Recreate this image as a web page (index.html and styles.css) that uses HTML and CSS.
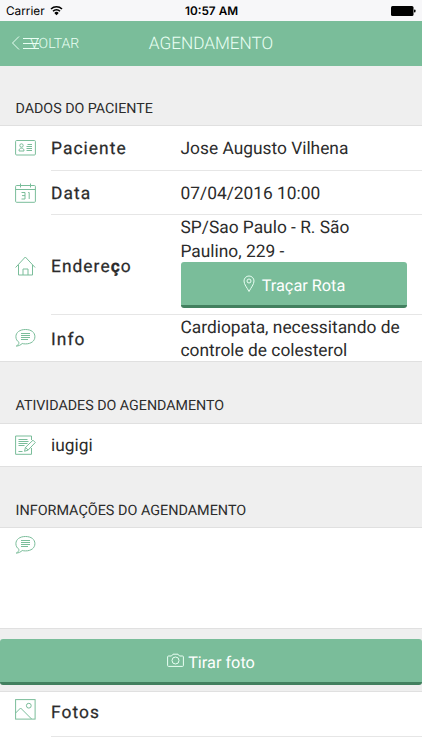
FILE: index.html
```html
<!DOCTYPE html>
<html lang="pt-BR">
<head>
<meta charset="utf-8">
<title>Agendamento</title>
<link rel="stylesheet" href="styles.css">
</head>
<body>
<svg class="defs" width="0" height="0">
  <symbol id="comment" viewBox="0 0 21 20"><path d="M4 14.400C2 13 .9 11 .9 8.700.9 4.400 4.700 1.500 10.500 1.500s9.400 2.900 9.400 7.200-3.700 7.200-9.400 7.200c-1.200 0-2.300-.1-3.300-.4-1.500 1.500-3.400 2.400-5.900 2.600C3 17 4 15.900 4 14.400Z"/><path d="M6 5.500h9M6 7.500h9M6 9.500h9M6 11.500h7"/></symbol>
</svg>
<div class="status">
  <div class="carrier"><span>Carrier</span><svg width="13" height="11" viewBox="0 0 13 11"><path d="M1 4a8 8 0 0 1 11 0M3 6.300a5 5 0 0 1 7 0"/><path class="solid" d="M4.300 7.900a3.200 3.200 0 0 1 4.400 0L6.500 10.300Z"/></svg></div>
  <div class="time">10:57 AM</div>
  <div class="battery"><svg width="26" height="12" viewBox="0 0 26 12"><rect x="0" y="1" width="22.500" height="10" rx="1.500"/><rect x="23" y="4.500" width="1.500" height="3" rx=".7"/></svg></div>
</div>
<header class="nav">
  <div class="back">
    <svg class="icon chevron" width="9" height="16" viewBox="0 0 9 16"><path d="M8 1.500 1.500 8 8 14.500"/></svg>
    <svg class="icon menu" width="17" height="16" viewBox="0 0 17 16"><path d="M0 3.500h16M0 8.500h16M0 13.500h16"/></svg>
    <span class="back-text">VOLTAR</span>
  </div>
  <h1>AGENDAMENTO</h1>
</header>
<main>
  <h2 class="first">DADOS DO PACIENTE</h2>
  <section class="list">
    <div class="row patient">
      <svg class="icon" width="21" height="20" viewBox="0 0 21 20"><rect x=".6" y="2.500" width="19.800" height="14.500" rx="1"/><circle cx="6.500" cy="7.500" r="1.700"/><path d="M4 13c0-2 1-2.800 2.500-2.800S9 11 9 13ZM12.500 6.500h4.500M11.500 8.500h5.500M11.500 10.500h5.500M11.500 12.500h5.500"/></svg>
      <div class="cell"><b>Paciente</b><span>Jose Augusto Vilhena</span></div>
    </div>
    <div class="row date">
      <svg class="icon" width="21" height="20" viewBox="0 0 21 20"><rect x=".6" y="2.500" width="19.800" height="16.800" rx="1"/><path d="M.6 6.500h19.800M5.500.500v4M15.500.500v4M6.500 9.500H10v6.500H6.500M7 12.600h3M13.200 9.500h1V16"/></svg>
      <div class="cell"><b>Data</b><span>07/04/2016 10:00</span></div>
    </div>
    <div class="row address">
      <svg class="icon" width="21" height="20" viewBox="0 0 21 20"><path d="M.6 11.500 10.300 1l9.800 10.500M3.500 9v10h14V9M8 19v-6h5v6"/></svg>
      <div class="cell"><b>Endere<span class="heavy">ç</span>o</b>
        <div class="value"><span>SP/Sao Paulo - R. São<br>Paulino, 229 -</span>
          <div class="button route"><svg class="icon" width="12" height="18" viewBox="0 0 12 18"><path d="M6 16.500C4 12.500 1 9.500 1 6a5 5 0 0 1 10 0c0 3.500-3 6.500-5 10.500Z"/><circle cx="6" cy="6" r="2"/></svg><span>Traçar Rota</span></div>
        </div>
      </div>
    </div>
    <div class="row info">
      <svg class="icon" width="21" height="20"><use href="#comment"/></svg>
      <div class="cell"><b>Info</b><span>Cardiopata, necessitando de<br>controle de colesterol</span></div>
    </div>
  </section>
  <h2 class="activities">ATIVIDADES DO AGENDAMENTO</h2>
  <section class="list">
    <div class="row activity">
      <svg class="icon" width="21" height="20" viewBox="0 0 21 20"><path d="M16.500 5V1H.6v18.300h15.900V13M3.500 4.500h9M3.500 6.500h10M3.500 8.500h9M3.500 10.500h6M3.500 16.500h4M9.500 16.300l1-4L18 5.200l2.300 2.300-7.200 7.600ZM10.500 12.300l2.600 2.800"/></svg>
      <div class="cell"><span>iugigi</span></div>
    </div>
  </section>
  <h2 class="information">INFORMAÇÕES DO AGENDAMENTO</h2>
  <section class="list notes">
    <svg class="icon" width="21" height="20"><use href="#comment"/></svg>
  </section>
  <div class="photo-bar">
    <div class="button photo"><svg class="icon" width="17" height="15" viewBox="0 0 17 15"><path d="M1.500 3h3L6 1.200h5L12.500 3h3q.9 0 .9.900v8.600q0 .9-.9.900h-14q-.9 0-.9-.9V3.900q0-.9.900-.9Z"/><circle cx="8.500" cy="7.500" r="3.500"/></svg><span>Tirar foto</span></div>
  </div>
  <section class="list last">
    <div class="row photos">
      <svg class="icon" width="21" height="21" viewBox="0 0 21 21"><rect x=".6" y=".6" width="19.500" height="19.500"/><circle cx="13.800" cy="6.700" r="2.400"/><path d="m.6 14 5-5 11 11"/></svg>
      <div class="cell"><b>Fotos</b></div>
    </div>
  </section>
</main>
</body>
</html>
```
FILE: styles.css
```css
* { box-sizing: border-box; }
body {
  margin: 0;
  height: 750px;
  overflow: hidden;
  background: #efefef;
  color: #2b2b2b;
  font-family: Roboto, sans-serif;
  font-size: 17.35px;
  line-height: 23.5px;
  text-rendering: geometricPrecision;
}
.defs { display: none; }
.status {
  display: grid;
  grid-template-columns: 1fr auto 1fr;
  align-items: center;
  height: 21px;
  padding: 2px 5px 0 6px;
  background: #f7f7f9;
  color: #000;
  font: 11.8px/19px Inter, sans-serif;
}
.carrier { display: flex; align-items: center; gap: 5px; }
.carrier svg { fill: none; stroke: #000; stroke-width: 1.600; margin-top: -2px; }
.carrier .solid { fill: #000; stroke: none; }
.time { font-weight: 600; }
.battery { display: flex; justify-content: flex-end; }
.battery svg { margin-top: -2px; }
.nav {
  display: grid;
  grid-template-columns: 1fr auto 1fr;
  align-items: center;
  height: 44.5px;
  background: #7abd9a;
  color: #e9fff3;
}
.back { display: flex; align-items: center; padding-left: 11px; }
.menu { margin-left: 3px; }
.back-text { margin-left: -10px; padding-top: 2px; font-size: 14.1px; font-weight: 300; }
h1 { margin: 0; padding-top: 2px; font-size: 17.2px; font-weight: 300; }
h2 {
  display: flex;
  align-items: flex-end;
  margin: 0;
  padding: 0 15.5px 4px;
  font-size: 14.25px;
  font-weight: 400;
}
.first { height: 59.5px; }
.activities { height: 60.5px; }
.information { height: 60px; padding-bottom: 5px; font-size: 14.4px; }
.list { background: #fff; border-top: 1px solid #e0e0e0; border-bottom: 1px solid #e0e0e0; }
.row { display: flex; align-items: center; padding-left: 15px; }
.icon { flex: none; fill: none; stroke: #7abd9a; stroke-width: 1; }
.nav .icon, .button .icon { stroke: #e9fff3; }
.cell {
  flex: 1;
  display: flex;
  align-items: center;
  align-self: stretch;
  margin-left: 15px;
  padding-top: 4px;
  border-bottom: 1px solid #e6e6e6;
}
.row:last-child .cell { border-bottom: 0; }
b { width: 129.5px; font-weight: 400; letter-spacing: 1.05px; -webkit-text-stroke: .25px #2b2b2b; }
.heavy { font-weight: 700; }
.patient, .date { height: 44.5px; }
.address { height: 100px; }
.address > .icon { margin-top: 2px; }
.address .cell { padding-top: 0; }
.address b { padding-top: 6px; }
.info { height: 46px; }
.info b { padding-top: 2px; }
.activity { height: 42.5px; }
.notes { height: 102px; padding: 7px 15px; }
.value { align-self: flex-start; width: 226px; padding-top: 1px; }
.value > span { display: block; height: 46px; padding-top: 1px; }
.button {
  display: flex;
  align-items: center;
  justify-content: center;
  height: 46px;
  border-bottom: 3px solid #42805f;
  border-radius: 3px;
  background: #7abd9a;
  color: #fff;
}
.button > span { padding-top: 4px; font-size: 16.3px; }
.route { gap: 7px; }
.route .icon { margin-left: 1px; }
.photo-bar { padding: 10px 0 6px; }
.photo { gap: 4px; }
.last { height: 70px; }
.row.photos { height: 45px; }
.photos .icon { margin-top: -10px; }
.row.photos .cell { padding-top: 0; padding-bottom: 1px; border-bottom: 1px solid #e6e6e6; }
```
